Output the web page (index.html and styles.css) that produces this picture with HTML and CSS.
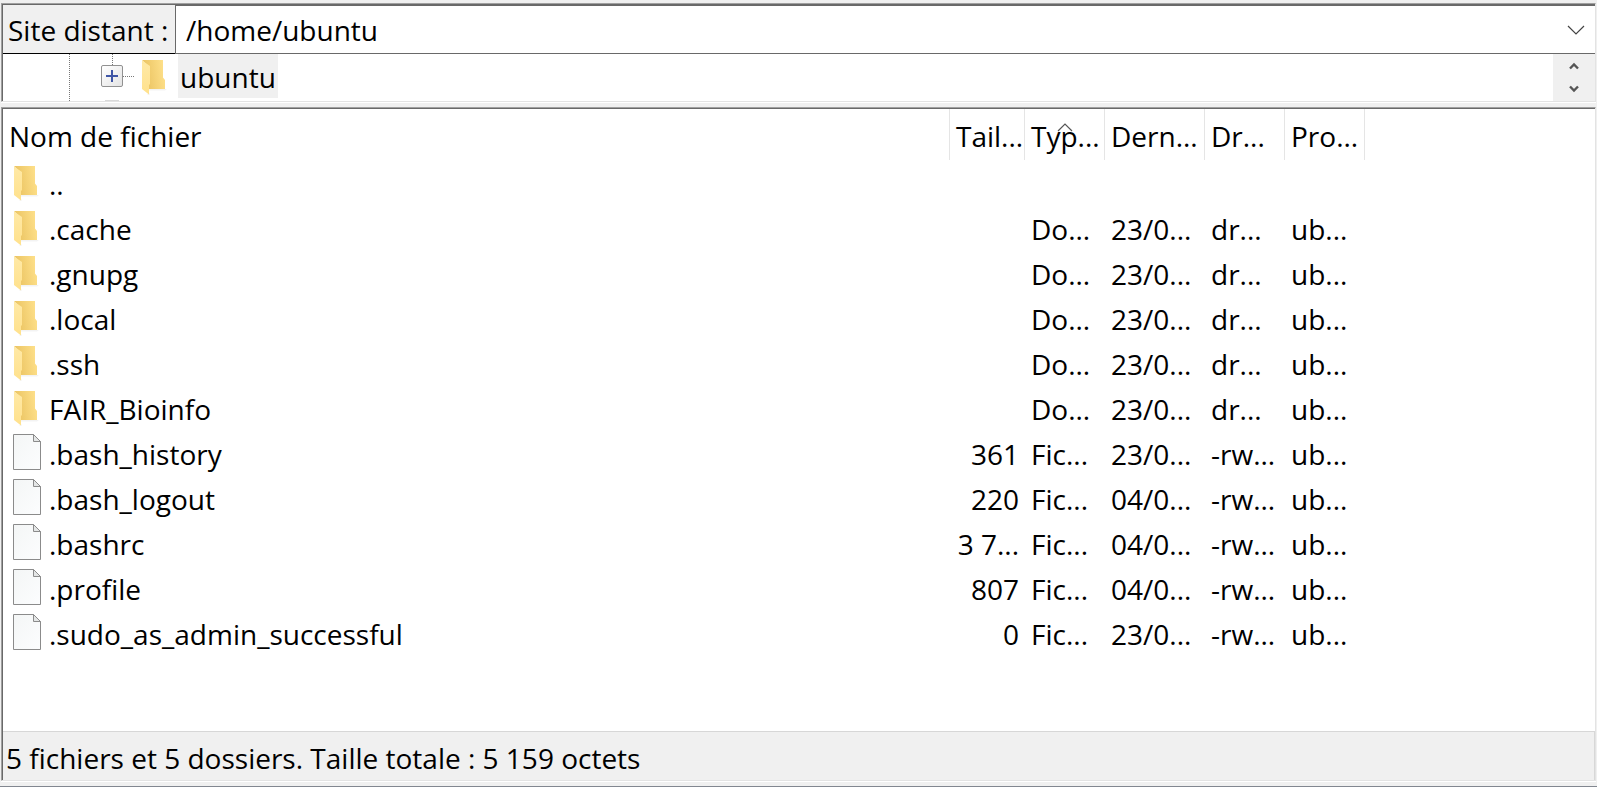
FILE: index.html
```html
<!DOCTYPE html>
<html lang="fr">
<head>
<meta charset="utf-8">
<title>Site distant</title>
<link rel="stylesheet" href="styles.css">
</head>
<body>
<svg class="defs" aria-hidden="true">
  <defs>
    <linearGradient id="back" x1="0" x2="1" y1="0.6" y2="0.4">
      <stop offset="0" stop-color="#e9c262"/>
      <stop offset="0.300" stop-color="#efca6b"/>
      <stop offset="1" stop-color="#fee08a"/>
    </linearGradient>
    <linearGradient id="front" x1="0" x2="0" y1="0" y2="1">
      <stop offset="0" stop-color="#ffe9a6"/>
      <stop offset="1" stop-color="#ffe18c"/>
    </linearGradient>
    <linearGradient id="paper" x1="0" x2="1" y1="0" y2="1">
      <stop offset="0" stop-color="#f4f6f6"/>
      <stop offset="1" stop-color="#fcfdfe"/>
    </linearGradient>
    <symbol id="folder" viewBox="0 0 26 36">
      <path d="M7 29H25L23 30.500H7Z" fill="#f3f3f3"/>
      <path d="M0 0H21V17.500L23 20V29H5V5Z" fill="url(#back)"/>
      <path d="M7 33L8 34.500H5Z" fill="#eeeeee"/>
      <path d="M0 0.500L8 6V24L7 25V34.500L0 29Z" fill="url(#front)"/>
    </symbol>
    <symbol id="file" viewBox="0 0 28 36">
      <path d="M0.500 0.500H20.500L27.500 7.500V35.500H0.500Z" fill="url(#paper)" stroke="#8b8b8b"/>
      <path d="M20.500 0.500V7.500H27.500Z" fill="#e4e6e6" stroke="#8b8b8b"/>
    </symbol>
  </defs>
</svg>
<main class="window">
  <section class="panel remote">
    <div class="path-bar">
      <label class="path-label" for="path">Site distant :</label>
      <div class="combo">
        <select id="path" class="path-select"><option>/home/ubuntu</option></select>
        <svg class="combo-arrow" width="18" height="10" viewBox="0 0 18 10"><path d="M1 1L9 9L17 1" fill="none" stroke="#444" stroke-width="1.200"/></svg>
      </div>
    </div>
    <div class="tree">
      <div class="tree-view">
        <div class="guide"></div>
        <div class="branch">
          <button class="expander" aria-label="Développer ubuntu"><svg width="12" height="12" viewBox="0 0 12 12"><path d="M0 6H12M6 0V12" stroke="#3f56a6" stroke-width="2"/></svg></button>
          <svg class="next-node" width="14" height="1"><path d="M0 0H14V1H0Z" fill="#d9d9d9"/></svg>
        </div>
        <div class="link"></div>
        <svg class="tree-icon" width="26" height="36"><use href="#folder"/></svg>
        <span class="tree-name">ubuntu</span>
      </div>
      <div class="scrollbar">
        <button class="scroll-btn" aria-label="Haut"><svg width="10" height="8" viewBox="0 0 10 8"><path d="M1 6.500L5 2.500L9 6.500" fill="none" stroke="#555" stroke-width="2.400"/></svg></button>
        <button class="scroll-btn" aria-label="Bas"><svg width="10" height="8" viewBox="0 0 10 8"><path d="M1 1.500L5 5.500L9 1.500" fill="none" stroke="#555" stroke-width="2.400"/></svg></button>
      </div>
    </div>
  </section>
  <section class="panel listing">
    <div class="files">
      <table class="file-table">
        <colgroup><col class="c-name"><col class="c-size"><col class="c-type"><col class="c-date"><col class="c-rights"><col class="c-owner"><col></colgroup>
        <thead>
          <tr><th>Nom de fichier</th><th>Tail...</th><th>Typ...<svg class="sort" width="16" height="9" viewBox="0 0 16 9"><path d="M1 8L8 1L15 8" fill="none" stroke="#555" stroke-width="1.200"/></svg></th><th>Dern...</th><th>Dr...</th><th>Pro...</th><th class="rest"></th></tr>
        </thead>
        <tbody>
          <tr><td><div class="entry"><svg class="icon" width="28" height="36"><use href="#folder" width="26" height="36" x="1" /></svg>..</div></td><td></td><td></td><td></td><td></td><td></td><td></td></tr>
          <tr><td><div class="entry"><svg class="icon" width="28" height="36"><use href="#folder" width="26" height="36" x="1" /></svg>.cache</div></td><td></td><td>Do...</td><td>23/0...</td><td>dr...</td><td>ub...</td><td></td></tr>
          <tr><td><div class="entry"><svg class="icon" width="28" height="36"><use href="#folder" width="26" height="36" x="1" /></svg>.gnupg</div></td><td></td><td>Do...</td><td>23/0...</td><td>dr...</td><td>ub...</td><td></td></tr>
          <tr><td><div class="entry"><svg class="icon" width="28" height="36"><use href="#folder" width="26" height="36" x="1" /></svg>.local</div></td><td></td><td>Do...</td><td>23/0...</td><td>dr...</td><td>ub...</td><td></td></tr>
          <tr><td><div class="entry"><svg class="icon" width="28" height="36"><use href="#folder" width="26" height="36" x="1" /></svg>.ssh</div></td><td></td><td>Do...</td><td>23/0...</td><td>dr...</td><td>ub...</td><td></td></tr>
          <tr><td><div class="entry"><svg class="icon" width="28" height="36"><use href="#folder" width="26" height="36" x="1" /></svg>FAIR_Bioinfo</div></td><td></td><td>Do...</td><td>23/0...</td><td>dr...</td><td>ub...</td><td></td></tr>
          <tr><td><div class="entry"><svg class="icon doc" width="28" height="36"><use href="#file"/></svg>.bash_history</div></td><td>361</td><td>Fic...</td><td>23/0...</td><td>-rw...</td><td>ub...</td><td></td></tr>
          <tr><td><div class="entry"><svg class="icon doc" width="28" height="36"><use href="#file"/></svg>.bash_logout</div></td><td>220</td><td>Fic...</td><td>04/0...</td><td>-rw...</td><td>ub...</td><td></td></tr>
          <tr><td><div class="entry"><svg class="icon doc" width="28" height="36"><use href="#file"/></svg>.bashrc</div></td><td>3 7...</td><td>Fic...</td><td>04/0...</td><td>-rw...</td><td>ub...</td><td></td></tr>
          <tr><td><div class="entry"><svg class="icon doc" width="28" height="36"><use href="#file"/></svg>.profile</div></td><td>807</td><td>Fic...</td><td>04/0...</td><td>-rw...</td><td>ub...</td><td></td></tr>
          <tr><td><div class="entry"><svg class="icon doc" width="28" height="36"><use href="#file"/></svg>.sudo_as_admin_successful</div></td><td>0</td><td>Fic...</td><td>23/0...</td><td>-rw...</td><td>ub...</td><td></td></tr>
        </tbody>
      </table>
    </div>
    <footer class="status">5 fichiers et 5 dossiers. Taille totale : 5 159 octets</footer>
  </section>
</main>
</body>
</html>
```
FILE: styles.css
```css
* { box-sizing: border-box; }
body {
  margin: 0;
  background: #fff;
  color: #000;
  font: 28px/36px "Open Sans", "Noto Sans", sans-serif;
}
.defs { position: absolute; width: 0; height: 0; }
svg { display: block; flex: none; }
button { padding: 0; border: 0; background: none; font: inherit; color: inherit; }

.window {
  display: flex;
  flex-direction: column;
  gap: 4px;
  height: calc(100vh - 2px);
  padding: 3px 0 4px 1px;
  background: #f0f0f0;
  border-bottom: 1px solid #828790;
}
.panel {
  display: flex;
  flex-direction: column;
  border: 1px solid #e3e3e3;
  border-top-color: #a0a0a0;
  border-left-color: #a0a0a0;
  box-shadow: inset 1px 1px #696969, 0 1px #fff;
  margin: 0 1px 1px 0;
  padding: 1px 0 0 1px;
}
.listing { flex: 1; min-height: 0; }

.path-bar { display: flex; height: 49px; }
.path-label {
  width: 172px;
  padding: 7px 0 0 5px;
  border-bottom: 1px solid #000;
  white-space: nowrap;
}
.combo {
  position: relative;
  flex: 1;
  border: 1px solid #696969;
  border-right: 0;
  background: #fff;
}
.path-select {
  width: 100%;
  height: 100%;
  padding: 0 44px 0 10px;
  border: 0;
  appearance: none;
  background: transparent;
  color: inherit;
  font: inherit;
}
.combo-arrow { position: absolute; right: 10px; top: 19px; pointer-events: none; }

.tree { display: flex; height: 47px; background: #fff; }
.tree-view { display: flex; flex: 1; }
.guide { width: 67px; border-right: 1px dotted #777; }
.branch {
  display: flex;
  flex-direction: column;
  justify-content: space-between;
  align-items: center;
  width: 53px;
  padding-left: 31px;
  background: repeating-linear-gradient(#777 0 1px, transparent 1px 2px) 42px 0 / 1px 11px no-repeat;
}
.expander {
  display: grid;
  place-items: center;
  width: 22px;
  height: 22px;
  margin-top: 11px;
  border: 1px solid #919191;
  border-radius: 2px;
  background: linear-gradient(135deg, #fff, #e4e4e4);
}
.link { width: 11px; height: 23px; border-bottom: 1px dotted #777; }
.tree-icon { margin: 6px 10px 0 8px; }
.tree-name { height: 44px; padding: 5px 2px 0; background: #f0f0f0; }
.scrollbar { display: flex; flex-direction: column; width: 42px; background: #f0f0f0; }
.scroll-btn { display: grid; flex: 1; place-items: center; }

.files { flex: 1; min-height: 0; overflow: hidden; background: #fff; }
.file-table { width: 100%; table-layout: fixed; border-collapse: separate; border-spacing: 0; }
.c-name { width: 947px; }
.c-size { width: 75px; }
.c-type, .c-rights, .c-owner { width: 80px; }
.c-date { width: 100px; }
th, td { padding: 0 0 0 6px; font-weight: 400; text-align: left; white-space: nowrap; }
th {
  position: relative;
  height: 51px;
  padding-top: 3px;
  background: linear-gradient(#e5e5e5, #e5e5e5) right / 1px 100% no-repeat;
}
th.rest { background: none; }
.sort { position: absolute; left: 32px; top: 14px; }
td { height: 45px; padding-top: 2px; }
td:first-child { padding: 2px 0 0 10px; }
td:nth-child(2) { padding: 2px 6px 0 0; text-align: right; }
.entry { display: flex; align-items: center; gap: 8px; }
.doc { margin: -2px 0 2px; }

.status {
  height: 49px;
  padding: 8px 3px 0;
  border-top: 1px solid #d7d7d7;
  box-shadow: inset -1px 0 #d7d7d7;
  background: #f0f0f0;
}
```
